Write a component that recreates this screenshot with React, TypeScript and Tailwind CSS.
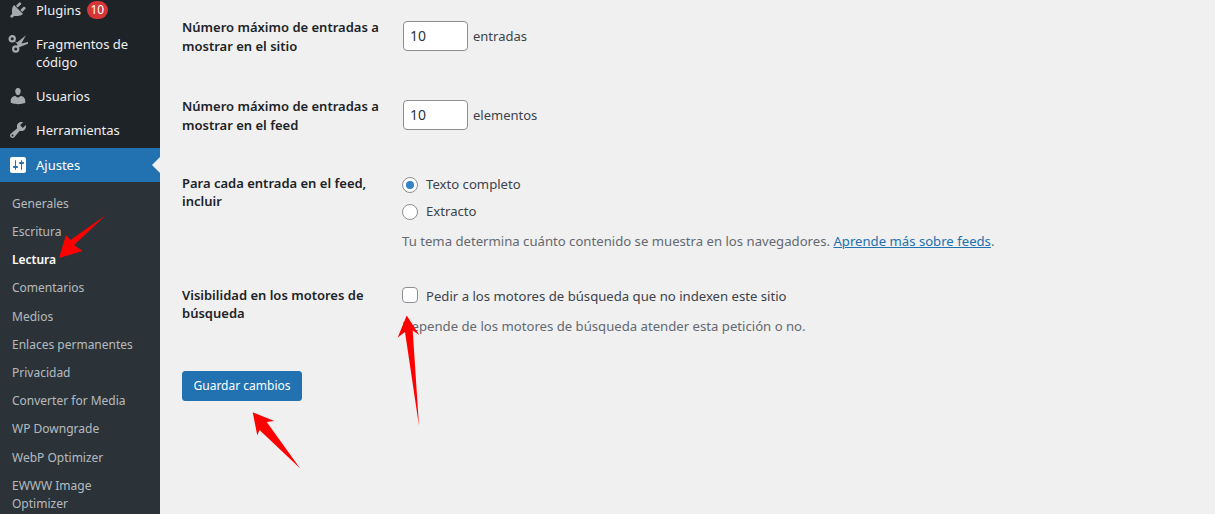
import React from "react";

const submenu = [
  "Generales",
  "Escritura",
  "Lectura",
  "Comentarios",
  "Medios",
  "Enlaces permanentes",
  "Privacidad",
  "Converter for Media",
  "WP Downgrade",
  "WebP Optimizer",
  "EWWW Image Optimizer",
];

const PluginIcon = () => (
  <svg viewBox="0 0 20 20" className="w-5 h-5 fill-[#a7aaad]">
    <path d="M13.11 4.36L9.87 7.6 8 5.73l3.24-3.24c.35-.34 1.05-.2 1.56.32.52.51.66 1.21.31 1.55zm-8 1.77l.91-1.12 9.01 9.01-1.19.84c-.71.71-2.63 1.16-3.82 1.16H6.14L4.9 17.26c-.59.59-1.54.59-2.12 0-.59-.58-.59-1.53 0-2.12l1.24-1.24v-3.88c0-1.13.4-3.19 1.09-3.89zm7.26 3.97l3.24-3.24c.34-.35 1.04-.21 1.55.31.52.51.66 1.21.31 1.55l-3.24 3.25z" />
  </svg>
);

const ScissorsIcon = () => (
  <svg viewBox="0 0 20 20" className="w-5 h-5 fill-[#a7aaad] stroke-[#a7aaad]">
    <circle cx="4.2" cy="4.8" r="2.6" fill="none" strokeWidth="2.2" />
    <circle cx="7.7" cy="15" r="2.6" fill="none" strokeWidth="2.2" />
    <path strokeWidth="0" d="M5.8 6.6 L9 8.4 L18 1.2 L13.4 9.6 L20.2 8 L20.2 9.6 L10.6 13.4 L8.4 12.6 L9.6 10.6 Z" />
  </svg>
);

const UserIcon = () => (
  <svg viewBox="0 0 20 20" className="w-5 h-5 fill-[#a7aaad]">
    <path d="M10 9.25c-2.27 0-2.73-3.44-2.73-3.44C7 4.02 7.82 2 9.97 2c2.16 0 2.98 2.02 2.71 3.81 0 0-.41 3.44-2.68 3.44zm0 2.57L12.72 10c2.39 0 4.52 2.33 4.52 4.53v2.49s-3.65 1.13-7.24 1.13c-3.65 0-7.24-1.13-7.24-1.13v-2.49c0-2.25 1.94-4.48 4.47-4.48z" />
  </svg>
);

const ToolsIcon = () => (
  <svg viewBox="0 0 20 20" className="w-5 h-5 fill-[#a7aaad]">
    <path d="M16.68 9.77c-1.34 1.34-3.3 1.67-4.95.99l-5.41 6.52c-.99.99-2.59.99-3.58 0s-.99-2.59 0-3.57l6.52-5.42c-.68-1.65-.35-3.61.99-4.95 1.28-1.28 3.12-1.62 4.72-1.06l-2.89 2.89 2.82 2.82 2.86-2.87c.53 1.58.18 3.39-1.08 4.65zM3.81 16.21c.4.39 1.04.39 1.43 0 .4-.4.4-1.04 0-1.43-.39-.4-1.03-.4-1.43 0-.39.39-.39 1.03 0 1.43z" />
  </svg>
);

const SettingsIcon = () => (
  <svg viewBox="0 0 20 20" className="w-5 h-5 fill-white">
    <path d="M18 16V4c0-1.1-.9-2-2-2H4c-1.1 0-2 .9-2 2v12c0 1.1.9 2 2 2h12c1.1 0 2-.9 2-2zM8 11h1c.55 0 1 .45 1 1s-.45 1-1 1H8v1.5c0 .28-.22.5-.5.5s-.5-.22-.5-.5V13H6c-.55 0-1-.45-1-1s.45-1 1-1h1V5.500c0-.28.22-.5.5-.5s.5.22.5.5V11zm5-2h-1c-.55 0-1-.45-1-1s.45-1 1-1h1V5.500c0-.28.22-.5.5-.5s.5.22.5.5V7h1c.55 0 1 .45 1 1s-.45 1-1 1h-1v5.500c0 .28-.22.5-.5.5s-.5-.22-.5-.5V9z" />
  </svg>
);

const MenuItem = ({ icon, children }: { icon: React.ReactNode; children: React.ReactNode }) => (
  <div className="flex items-start min-h-[34px] text-[#f0f0f1]">
    <div className="w-9 h-[34px] shrink-0 flex items-center pl-2">{icon}</div>
    <div className="py-2 leading-[18px]">{children}</div>
  </div>
);

const NumberField = ({ unit }: { unit: string }) => (
  <div className="flex items-center gap-[5px] ml-px">
    <div className="w-[65px] h-[30px] bg-white border border-[#8c8f94] rounded text-[#2c3338] pl-[6px] leading-[28px] text-sm">10</div>
    <span className="pt-[2px]">{unit}</span>
  </div>
);

const Radio = ({ checked }: { checked?: boolean }) => (
  <span className="w-4 h-4 rounded-full bg-white border border-[#8c8f94] flex items-center justify-center shrink-0">
    {checked && <span className="w-2 h-2 rounded-full bg-[#3582c4]" />}
  </span>
);

const Row = ({ label, rowClass, children }: { label: React.ReactNode; rowClass: string; children: React.ReactNode }) => (
  <div className={`flex pt-3 ${rowClass}`}>
    <div className="w-[220px] shrink-0 font-semibold text-[#1d2327]">{label}</div>
    <div className="pt-[15px] leading-normal">{children}</div>
  </div>
);

export default function App() {
  return (
    <div className="relative flex h-[514px] w-[1215px] overflow-hidden bg-[#f0f0f0] text-[13px] text-[#3c434a] font-['Noto_Sans',sans-serif]">
      <aside className="w-40 shrink-0 bg-[#1d2327] -mt-[7px]">
        <MenuItem icon={<PluginIcon />}>
          <span className="flex items-center gap-[6px]">
            Plugins
            <span className="bg-[#d63638] text-white text-xs rounded-full w-[21px] h-[18px] leading-[18px] text-center">10</span>
          </span>
        </MenuItem>
        <MenuItem icon={<ScissorsIcon />}>Fragmentos de código</MenuItem>
        <MenuItem icon={<UserIcon />}>Usuarios</MenuItem>
        <MenuItem icon={<ToolsIcon />}>Herramientas</MenuItem>
        <div className="relative mt-px bg-[#2271b1] text-white">
          <MenuItem icon={<SettingsIcon />}>
            <span className="text-white">Ajustes</span>
          </MenuItem>
          <span className="absolute right-0 top-[9px] border-y-8 border-r-8 border-y-transparent border-r-[#f0f0f0]" />
        </div>
        <ul className="bg-[#2c3338] pt-[7.7px] h-[400px] text-xs text-[#f0f6fcb3]">
          {submenu.map((item) => (
            <li key={item} className={`px-3 py-[5px] leading-[18.2px] ${item === "Lectura" ? "font-semibold text-white" : ""}`}>
              {item}
            </li>
          ))}
        </ul>
      </aside>

      <main className="flex-1 pl-[22px] pt-[6px]">
        <Row rowClass="h-[79px] leading-[18.5px]" label="Número máximo de entradas a mostrar en el sitio">
          <div className="-mt-3">
            <NumberField unit="entradas" />
          </div>
        </Row>
        <Row rowClass="h-[77px] leading-[18.5px]" label="Número máximo de entradas a mostrar en el feed">
          <div className="-mt-3">
            <NumberField unit="elementos" />
          </div>
        </Row>
        <Row rowClass="h-[112px] leading-[18.2px]" label="Para cada entrada en el feed, incluir">
          <div className="-mt-[13px] text-[13.15px]">
            <label className="flex items-center gap-2 h-[18px]">
              <Radio checked />
              Texto completo
            </label>
            <label className="flex items-center gap-2 h-[18px] mt-[9px]">
              <Radio />
              Extracto
            </label>
            <p className="mt-[11px] text-[#646970]">
              Tu tema determina cuánto contenido se muestra en los navegadores.{" "}
              <a className="text-[#2271b1] underline">Aprende más sobre feeds</a>.
            </p>
          </div>
        </Row>
        <Row rowClass="h-[97px] leading-[18.2px]" label="Visibilidad en los motores de búsqueda">
          <div className="-mt-[14px] text-[13.15px]">
            <label className="flex items-start gap-2 h-4">
              <span className="w-4 h-4 bg-white border border-[#8c8f94] rounded shrink-0" />
              <span className="leading-[18px]">Pedir a los motores de búsqueda que no indexen este sitio</span>
            </label>
            <p className="mt-[14px] text-[#646970]">Depende de los motores de búsqueda atender esta petición o no.</p>
          </div>
        </Row>
        <button className="w-[120px] h-[30px] bg-[#2271b1] border border-[#2271b1] rounded-[3px] text-xs text-white">Guardar cambios</button>
      </main>

      <svg className="absolute inset-0 w-[1215px] h-[514px] pointer-events-none" viewBox="0 0 1215 514">
        <polygon fill="#ff0000" points="106,215 74,245 82.5,251 59,258 66,235 70.5,240" />
        <polygon fill="#ff0000" points="406.7,315.5 419.3,335 412.7,330.5 419,426 405,332 397.7,337.5" />
        <polygon fill="#ff0000" points="252.7,412.3 274.3,421 266.7,422 300,468.3 259.5,430 257.3,435.5" />
      </svg>
    </div>
  );
}
